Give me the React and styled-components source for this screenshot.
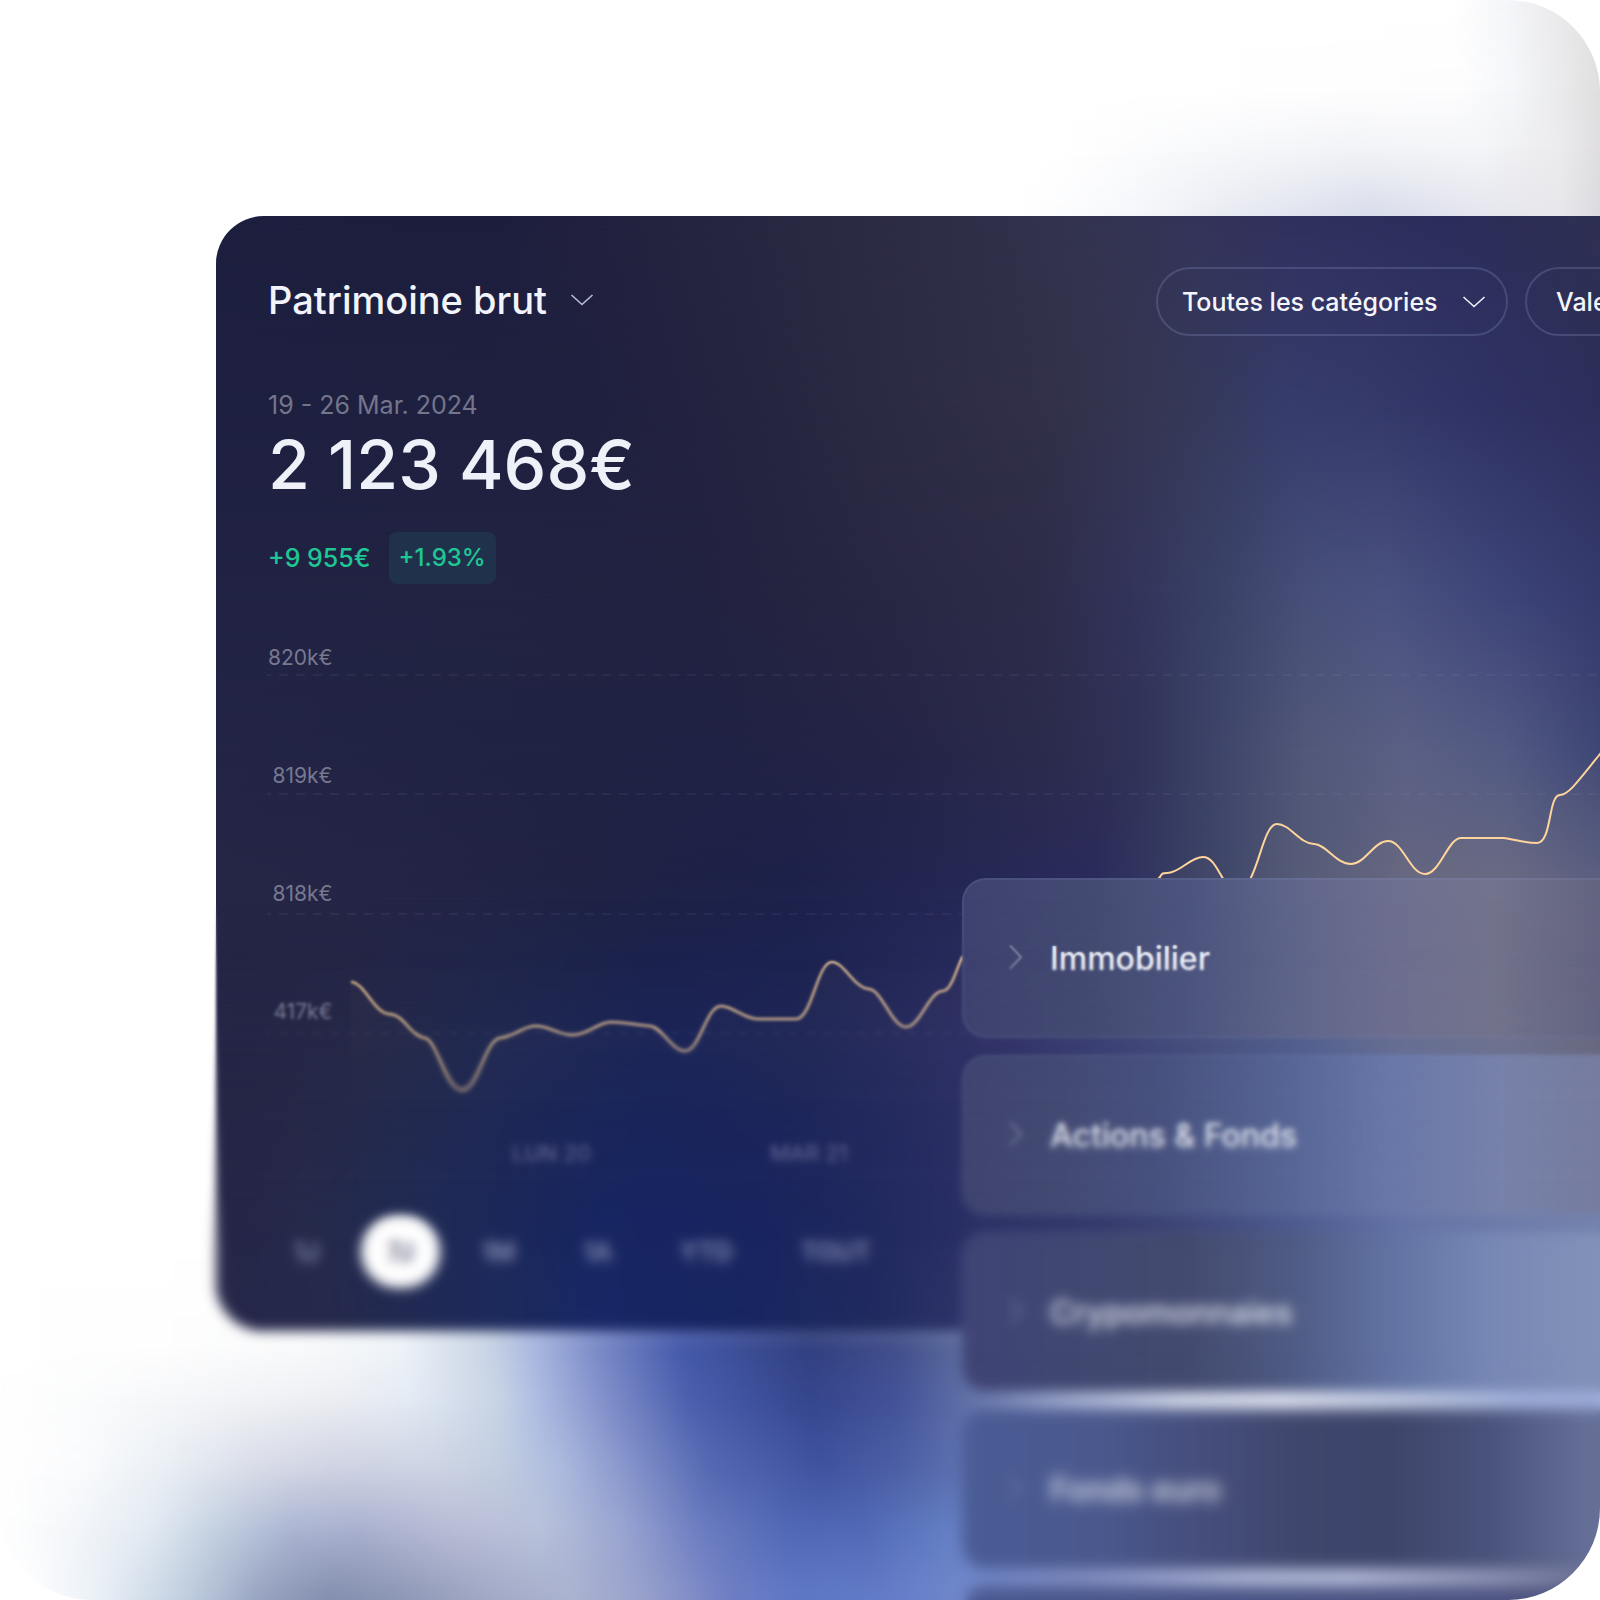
import React, { useState } from "react";
import styled, { createGlobalStyle, css } from "styled-components";

const GlobalStyle = createGlobalStyle`
  *, *::before, *::after { box-sizing: border-box; }
  body {
    margin: 0;
    background: #ffffff;
    color: #eef1f8;
    font-family: Inter, "Liberation Sans", sans-serif;
    -webkit-font-smoothing: antialiased;
  }
  button, select { font: inherit; color: inherit; }
`;

/* ---------- Gradient mesh: rows of horizontal gradients that fade into each other ---------- */

const MeshBox = styled.div`
  position: absolute;
  inset: -${(p) => p.$bleed}px;
  display: grid;
  overflow: hidden;
  border-radius: ${(p) => p.$radius}px;
  pointer-events: none;
`;

const MeshRow = styled.div`
  grid-area: 1 / 1;
  background: linear-gradient(90deg, ${(p) => p.$stops});
  ${(p) =>
    p.$to > 0 &&
    css`
      mask-image: linear-gradient(180deg, transparent ${p.$from}px, #000 ${p.$to}px);
    `}
`;

function Mesh({ rows, radius = 0, bleed = 0 }) {
  return (
    <MeshBox aria-hidden="true" $radius={radius} $bleed={bleed}>
      {rows.map(([y, stops], i) => (
        <MeshRow key={y} $from={i ? rows[i - 1][0] : 0} $to={y} $stops={stops} />
      ))}
    </MeshBox>
  );
}

const stageRows = [
  [0, "#fff 1450px, #f6f7fa 1505px, #ececee 1550px, #e2e0e1 1600px"],
  [90, "#fff 1180px, #fdfdfe 1460px, #f4f6f9 1515px, #eaeaec 1560px, #e0dede 1600px"],
  [150, "#fff 1060px, #f8f9fb 1200px, #f2f3f7 1350px, #f4f5f8 1480px, #ebebed 1560px, #dfdde0 1600px"],
  [216, "#fff 1020px, #f4f6fa 1140px, #e8eaf2 1230px, #d8dcea 1370px, #e4e5ee 1480px, #e7e6ea 1560px, #dbdadf 1600px"],
  [1230, "#fff 216px, #fff 300px"],
  [1345, "#fff 0px, #fefefe 160px, #fafbfc 300px, #eff4f9 400px, #c8d3e5 490px, #a9b7e0 535px, #7889c6 600px, #465aab 680px, #31407f 810px, #43508b 900px, #5b6b9c 960px, #8d9ac4 1040px, #c8d0e4 1200px, #ccd4e8 1300px, #a2b0d4 1450px, #98a8d6 1600px"],
  [1400, "#fff 0px, #fafbfc 100px, #f4f5f8 200px, #edeef3 330px, #e4ebf4 410px, #c8d3e5 500px, #b2c1e4 530px, #8593cc 600px, #4b5fae 690px, #36468e 810px, #44549a 900px, #5d6ea6 960px, #a2add0 1060px, #dde3f1 1180px, #eaeef8 1280px, #c4cee4 1420px, #a4b4de 1520px, #a0b0dc 1600px"],
  [1470, "#fff 0px, #fafbfd 80px, #e8eef4 170px, #d8dce8 250px, #ced2e2 330px, #ccd3e3 440px, #c2cde0 500px, #adbbdf 560px, #8b99cd 620px, #5569b3 710px, #40539f 820px, #4d60a6 900px, #5d70b0 960px, #8f9bc2 1100px, #b0b8d4 1300px, #9aa4c8 1600px"],
  [1530, "#fff 0px, #f6f8fb 60px, #e2eaf2 150px, #c2cfe0 220px, #abb5d2 290px, #a9b0cf 360px, #b9bdd6 460px, #b9c2da 540px, #9ba6d2 620px, #6c7dc1 700px, #5168b6 790px, #5169b6 860px, #6480c4 950px, #8490c0 1100px, #b4bcda 1250px, #bcc4de 1350px, #9a9fbc 1500px, #80829c 1600px"],
  [1600, "#fff 20px, #e8eff6 100px, #bdcbdd 190px, #96a2bf 260px, #828cac 330px, #8c96b4 400px, #a0a7c5 490px, #abb3cf 570px, #969fcb 650px, #6f7fc4 730px, #6079c6 800px, #657dc8 880px, #6f86cb 950px, #8490c4 1080px, #b4bcda 1250px, #b8bedc 1350px, #8a8fb0 1500px, #5f6188 1600px"],
];

const cardRows = [
  [0, "#1d1f3f 0px, #1d1e3d 280px, #252540 480px, #2d2c45 680px, #333450 880px, #33345a 980px, #30305d 1080px, #2c2d5b 1230px, #2e3052 1384px"],
  [190, "#1e2041 0px, #1f203f 380px, #252540 540px, #2c2b44 680px, #323149 840px, #353856 960px, #363c6b 1070px, #353a6b 1150px, #2f3264 1270px, #2d2e5b 1384px"],
  [380, "#212344 0px, #212342 280px, #212240 480px, #272641 630px, #2d2c48 820px, #32335a 910px, #3a4167 1000px, #474f79 1090px, #4a5280 1170px, #3d4478 1290px, #353a6d 1384px"],
  [540, "#232546 0px, #202343 280px, #1f2244 480px, #242447 680px, #2b2b4d 830px, #303257 920px, #3e4469 1000px, #525879 1090px, #5b6085 1190px, #535a83 1290px, #3f4775 1384px"],
  [660, "#262646 0px, #242546 180px, #1f2243 380px, #1d214a 580px, #242752 740px, #2b2b5b 880px, #3a4165 980px, #505776 1080px, #636580 1190px, #646782 1290px, #555b80 1384px"],
  [830, "#262647 0px, #262948 140px, #212a53 280px, #1b2558 440px, #202858 590px, #292d60 700px, #313269 790px, #3b4075 890px, #47507f 990px, #526090 1090px, #666e94 1190px, #6c7190 1290px, #66687f 1384px"],
  [1008, "#262648 0px, #262a4b 90px, #212b54 190px, #182662 390px, #1a2560 540px, #20295f 650px, #2a3065 750px, #353a6c 890px, #414a7c 990px, #505d92 1090px, #6574a6 1190px, #7484ae 1384px"],
  [1113, "#26274a 0px, #25294c 120px, #1d2a5b 280px, #182866 380px, #172560 520px, #1f2a5f 650px, #2e3468 750px, #3a4070 900px, #5060a0 1384px"],
];

/* ---------- Stage ---------- */

const Frame = styled.div`
  border-radius: 92px;
  overflow: hidden;
`;

const Stage = styled.main`
  position: relative;
  min-height: 100vh;
  padding: 216px 0 0 216px;
  overflow: hidden;
  will-change: filter;
`;

const Card = styled.section`
  position: relative;
  margin-right: -155px;
  padding: 49px 50px 41px;
  border: 2px solid rgba(110, 122, 180, 0.3);
  border-radius: 48px;
`;

const CardBody = styled.div`
  position: relative;
  display: flex;
  flex-direction: column;
`;

const Header = styled.header`
  display: flex;
  align-items: center;
  justify-content: space-between;
  height: 69px;
`;

const Filters = styled.div`
  display: flex;
  gap: 17px;
`;

const Select = styled.select`
  appearance: none;
  border: 0;
  padding: 0;
  background: transparent;
  cursor: pointer;
  option { color: #1d1f3f; }
`;

const TitlePicker = styled.label`
  display: flex;
  align-items: center;
  gap: 22px;
  padding-bottom: 4px;
  font-size: 38px;
  font-weight: 500;
  color: #f1f4fa;
`;

const Pill = styled.label`
  display: flex;
  align-items: center;
  gap: 24px;
  height: 69px;
  padding: 0 20px 0 ${(p) => p.$lead}px;
  border: 2px solid rgba(150, 165, 215, 0.24);
  border-radius: 35px;
  font-size: 25px;
  font-weight: 500;
  color: #f4f6fb;
`;

const Period = styled.p`
  margin: 53px 0 3px;
  font-size: 25px;
  line-height: 32px;
  color: #74758b;
`;

const Amount = styled.h1`
  margin: 0;
  font-size: 68px;
  font-weight: 500;
  line-height: 80px;
  color: #eef1f8;
`;

const Delta = styled.div`
  display: flex;
  align-items: center;
  gap: 18px;
  margin-top: 28px;
  font-size: 25px;
  font-weight: 500;
  color: #1fc795;
`;

const Badge = styled.span`
  padding: 10px;
  border-radius: 8px;
  background: #20324b;
  font-size: 24px;
  line-height: 32px;
`;

/* ---------- Chart ---------- */

const Plot = styled.div`
  display: grid;
  margin-top: 14px;
  height: 525px;
`;

const Axis = styled.ul`
  grid-area: 1 / 1;
  display: grid;
  grid-auto-rows: 118px;
  align-items: center;
  justify-items: end;
  width: 64px;
  margin: 0;
  padding: 0;
  list-style: none;
  font-size: 21px;
  color: #777890;
`;

const Curve = styled.svg`
  grid-area: 1 / 1;
  overflow: visible;
`;

const Days = styled.ul`
  display: grid;
  grid-auto-flow: column;
  grid-auto-columns: 258px;
  margin: 15px 0 0;
  padding: 0 0 0 244px;
  list-style: none;
  font-size: 22px;
  line-height: 30px;
  color: #6c6c9a;
`;

const Ranges = styled.div`
  display: flex;
  gap: 16px;
  margin-top: 47px;
`;

const Range = styled.button`
  height: 73px;
  padding: 0 26px;
  border: 0;
  border-radius: 37px;
  font-size: 25px;
  font-weight: 600;
  cursor: pointer;
  background: ${(p) => (p.$on ? "#ffffff" : "transparent")};
  color: ${(p) => (p.$on ? "#3c4062" : "#8f97ba")};
`;

const LINE =
  "M83 384 C96 384 107 416 121 416 C136 416 142 438 157 440 C169 442 178 492 194 492 C210 492 217 442 232 440 C248 438 254 428 268 428 C282 428 290 437 305 437 C320 437 330 424 343 424 C356 424 368 427 382 428 C394 429 404 453 417 453 C432 453 438 408 453 408 C465 408 476 421 490 421 L528 421 C544 421 549 364 564 364 C576 364 586 390 601 391 C614 392 624 429 638 429 C652 429 661 393 675 393 C684 392 689 369 695 357 C720 300 850 330 892 279 C894 275 895 275 899 275 C912 275 922 259 935 259 C950 259 954 292 969 292 C990 292 993 226 1009 226 C1022 226 1032 246 1046 246 C1058 246 1068 266 1083 266 C1097 266 1106 243 1120 243 C1135 243 1142 276 1157 276 C1172 276 1180 240 1193 240 L1235 240 C1246 241 1256 245 1269 245 C1284 245 1280 197 1292 197 C1300 197 1308 186 1332 156 C1344 142 1356 130 1380 118";

const gridLines = [77, 196, 316, 435];

function ChartLine() {
  return (
    <Curve width="1380" height="525" viewBox="0 0 1380 525" fill="none" role="img" aria-label="Évolution du patrimoine brut">
      <defs>
        <linearGradient id="area" x1="0" y1="330" x2="0" y2="525" gradientUnits="userSpaceOnUse">
          <stop offset="0" stopColor="#ffcf96" stopOpacity="0.03" />
          <stop offset="1" stopColor="#ffcf96" stopOpacity="0" />
        </linearGradient>
      </defs>
      {gridLines.map((y) => (
        <path key={y} d={`M-1 ${y}H1380`} stroke="#b4aad2" strokeOpacity="0.08" strokeWidth="2" strokeDasharray="9 8" strokeDashoffset="5" />
      ))}
      <path d={`${LINE} V525 H83 Z`} fill="url(#area)" />
      <path d={LINE} stroke="#ffd59c" strokeWidth="2" />
    </Curve>
  );
}

function Chevron({ color, turned }) {
  return turned ? (
    <svg width="14" height="26" viewBox="0 0 14 26" fill="none" aria-hidden="true">
      <path d="M1 0.5 12 12 1 23.5" stroke={color} strokeWidth="1.6" />
    </svg>
  ) : (
    <svg width="24" height="14" viewBox="0 0 24 14" fill="none" aria-hidden="true">
      <path d="M1.5 2 12 11.5 22.5 2" stroke={color} strokeWidth="1.6" />
    </svg>
  );
}

/* ---------- Floating list of asset classes ---------- */

const AssetList = styled.ul`
  position: absolute;
  top: 878px;
  left: 962px;
  right: -120px;
  display: grid;
  gap: 17px;
  margin: 0;
  padding: 0;
  list-style: none;
`;

const rowSurface = css`
  width: 100%;
  height: 160px;
  border: 2px solid rgba(150, 165, 215, 0.13);
  border-radius: 24px;
  background: linear-gradient(90deg, ${(p) => p.$stops}) border-box;
`;

const Asset = styled.button`
  ${rowSurface}
  display: flex;
  align-items: center;
  gap: 27px;
  padding: 0 45px;
  font-size: 32px;
  font-weight: 500;
  color: #eef1f8;
  cursor: pointer;
`;

const NextRow = styled.li`
  ${rowSurface}
`;

const assets = [
  ["Immobilier", "#3e426f 0px, #444b72 130px, #4d557f 230px, #5f658a 330px, #6d6f90 430px, #72738c 530px, #636480 640px"],
  ["Actions & Fonds", "#404470 0px, #434a73 90px, #48527f 200px, #576696 330px, #6978a9 430px, #7882aa 540px, #777c9f 640px"],
  ["Crypomonnaies", "#3f4475 0px, #404772 90px, #444b70 230px, #4f5b84 330px, #6273a3 430px, #7888b5 530px, #8292b8 640px"],
  ["Fonds euro", "#4a5c96 0px, #4a588d 140px, #464f7d 230px, #3f466d 340px, #3e456b 430px, #4a537c 530px, #68729a 640px"],
];

/* ---------- Depth of field: each layer adds blur below its start line ---------- */

const FocusLayer = styled.div`
  position: absolute;
  inset: 0;
  pointer-events: none;
  backdrop-filter: blur(${(p) => p.$radius}px);
  mask-image: linear-gradient(180deg, transparent ${(p) => p.$from}px, #000 ${(p) => p.$from + 70}px);
`;

const focusLayers = [
  [900, 1],
  [950, 1],
  [1020, 2],
  [1100, 3],
  [1180, 4],
  [1350, 4],
];

export default function App() {
  const [range, setRange] = useState("7J");
  return (
    <>
      <GlobalStyle />
      <Frame>
        <Stage>
          <Mesh rows={stageRows} />
          <Card>
            <Mesh rows={cardRows} radius={48} bleed={2} />
            <CardBody>
              <Header>
                <TitlePicker>
                  <Select aria-label="Indicateur">
                    <option>Patrimoine brut</option>
                  </Select>
                  <Chevron color="#b9bdd2" />
                </TitlePicker>
                <Filters>
                  <Pill $lead={24}>
                    <Select aria-label="Catégories">
                      <option>Toutes les catégories</option>
                    </Select>
                    <Chevron color="#eef1f8" />
                  </Pill>
                  <Pill $lead={29}>
                    <Select aria-label="Affichage">
                      <option>Valeur</option>
                    </Select>
                    <Chevron color="#eef1f8" />
                  </Pill>
                </Filters>
              </Header>
              <Period>19 - 26 Mar. 2024</Period>
              <Amount>2 123 468€</Amount>
              <Delta>
                <span>+9 955€</span>
                <Badge>+1.93%</Badge>
              </Delta>
              <Plot>
                <Axis>
                  {["820k€", "819k€", "818k€", "417k€"].map((t) => (
                    <li key={t}>{t}</li>
                  ))}
                </Axis>
                <ChartLine />
              </Plot>
              <Days>
                <li>LUN 20</li>
                <li>MAR 21</li>
              </Days>
              <Ranges>
                {["1J", "7J", "1M", "1A", "YTD", "TOUT"].map((r) => (
                  <Range key={r} type="button" $on={r === range} aria-pressed={r === range} onClick={() => setRange(r)}>
                    {r}
                  </Range>
                ))}
              </Ranges>
            </CardBody>
          </Card>
          <AssetList>
            {assets.map(([name, stops]) => (
              <li key={name}>
                <Asset type="button" $stops={stops}>
                  <Chevron turned color="#8d93b4" />
                  {name}
                </Asset>
              </li>
            ))}
            <NextRow aria-hidden="true" $stops="#4a5a92 0px, #4a5484 300px, #50557e 640px" />
          </AssetList>
          {focusLayers.map(([from, radius]) => (
            <FocusLayer key={from} $from={from} $radius={radius} />
          ))}
        </Stage>
      </Frame>
    </>
  );
}
